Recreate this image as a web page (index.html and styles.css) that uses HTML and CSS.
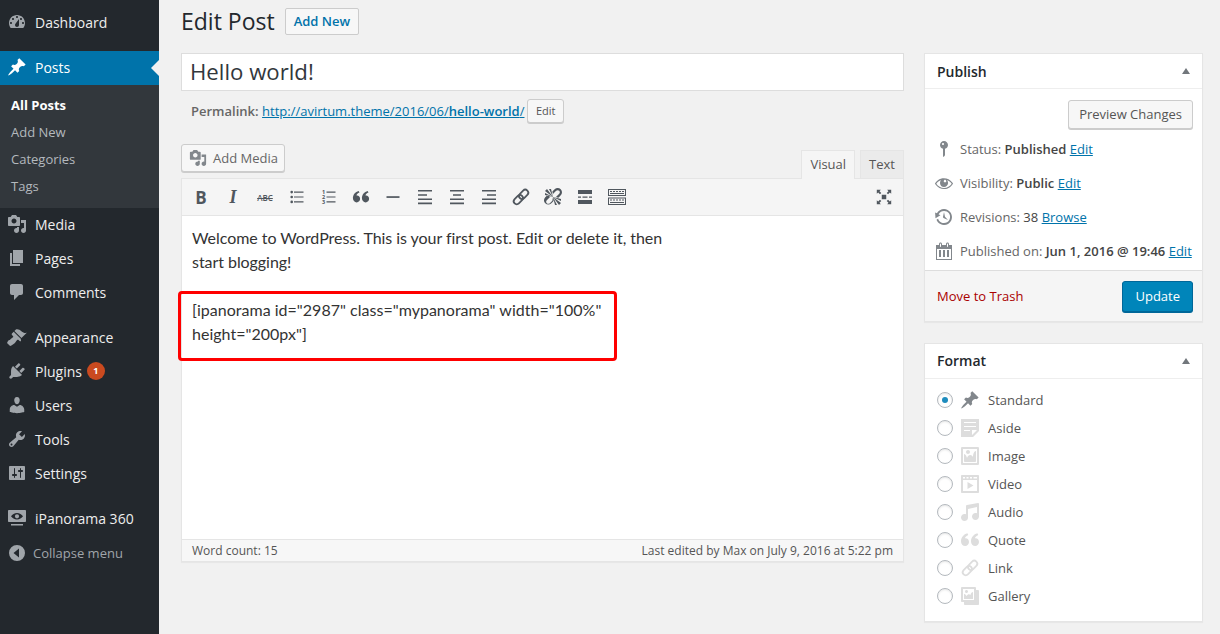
FILE: index.html
```html
<!DOCTYPE html>
<html lang="en">
<head>
    <meta charset="UTF-8">
    <title>Edit Post</title>
    <link rel="stylesheet" href="styles.css">
</head>
<body>
    <svg class="defs" xmlns="http://www.w3.org/2000/svg">
        <symbol id="i-dashboard" viewBox="0 0 20 20"><path d="M3.76 16h12.48c1.1-1.37 1.76-3.11 1.76-5 0-4.42-3.58-8-8-8s-8 3.58-8 8c0 1.89.66 3.63 1.76 5zM10 4c.55 0 1 .45 1 1s-.45 1-1 1-1-.45-1-1 .45-1 1-1zM6 6c.55 0 1 .45 1 1s-.45 1-1 1-1-.45-1-1 .45-1 1-1zm8 0c.55 0 1 .45 1 1s-.45 1-1 1-1-.45-1-1 .45-1 1-1zm-5.37 5.55L12 7v6c0 1.1-.9 2-2 2s-2-.9-2-2c0-.57.24-1.08.63-1.45zM4 10c.55 0 1 .45 1 1s-.45 1-1 1-1-.45-1-1 .45-1 1-1zm12 0c.55 0 1 .45 1 1s-.45 1-1 1-1-.45-1-1 .45-1 1-1z"/></symbol>
        <symbol id="i-pin" viewBox="0 0 20 20"><path d="M10.44 3.02l1.82-1.82 6.36 6.35-1.83 1.82c-1.05-.68-2.48-.57-3.41.36l-.75.75c-.92.93-1.04 2.35-.35 3.41l-1.83 1.82-2.41-2.41-2.8 2.79c-.42.42-3.38 2.71-3.8 2.29s1.86-3.39 2.28-3.81l2.79-2.79L4.1 9.36l1.83-1.82c1.05.69 2.48.57 3.4-.36l.75-.75c.93-.92 1.05-2.35.36-3.41z"/></symbol>
        <symbol id="i-media" viewBox="0 0 20 20"><path d="M13 11V4c0-.55-.45-1-1-1h-1.67L9 1H5L3.67 3H2c-.55 0-1 .45-1 1v7c0 .55.45 1 1 1h10c.55 0 1-.45 1-1zM7 4.5c1.38 0 2.5 1.12 2.5 2.5S8.38 9.5 7 9.5 4.5 8.38 4.5 7 5.62 4.5 7 4.5zM14 6h5v10.5c0 1.38-1.12 2.5-2.5 2.5S14 17.88 14 16.5s1.12-2.5 2.5-2.5c.17 0 .34.02.5.05V9h-3V6zm-4 8.05V13h2v3.5c0 1.38-1.12 2.5-2.5 2.5S7 17.88 7 16.5 8.12 14 9.5 14c.17 0 .34.02.5.05z"/></symbol>
        <symbol id="i-pages" viewBox="0 0 20 20"><path d="M6 15V2h10v13H6zm-1 1h8v2H3V5h2v11z"/></symbol>
        <symbol id="i-comments" viewBox="0 0 20 20"><path d="M5 2h9c1.1 0 2 .9 2 2v7c0 1.1-.9 2-2 2h-2l-5 5v-5H5c-1.1 0-2-.9-2-2V4c0-1.1.9-2 2-2z"/></symbol>
        <symbol id="i-brush" viewBox="0 0 20 20"><path d="M14.48 11.06L7.41 3.99l1.5-1.5c.5-.56 2.3-.47 3.51.32 1.21.8 1.43 1.28 2.91 2.1 1.18.64 2.45 1.26 4.45.85zm-.71.71L6.7 4.7 4.93 6.47c-.39.39-.39 1.02 0 1.41l1.06 1.06c.39.39.39 1.03 0 1.42-.6.6-1.43 1.11-2.21 1.69-.35.26-.7.53-1.01.84C1.43 12.73.96 14.1 0 15.9L3.1 19c1.8-.96 3.17-1.43 4.52-2.78.31-.31.58-.66.84-1.01.58-.78 1.09-1.61 1.69-2.21.39-.39 1.03-.39 1.42 0l1.06 1.06c.39.39 1.02.39 1.41 0z"/></symbol>
        <symbol id="i-plugin" viewBox="0 0 20 20"><path d="M13.11 4.36L9.87 7.6 8 5.73l3.24-3.24c.35-.34 1.05-.2 1.56.32.52.51.66 1.21.31 1.55zm-8 1.77l.91-1.12 9.01 9.01-1.19.84c-.71.71-2.63 1.16-3.82 1.16H6.14L4.9 17.26c-.59.59-1.54.59-2.12 0-.59-.58-.59-1.53 0-2.12l1.24-1.24v-3.88c0-1.13.4-3.19 1.09-3.89zm7.26 3.97l3.24-3.24c.34-.35 1.04-.21 1.55.31.52.51.66 1.21.31 1.55l-3.24 3.25z"/></symbol>
        <symbol id="i-users" viewBox="0 0 20 20"><path d="M10 9.25c-2.27 0-2.73-3.44-2.73-3.44C7 4.02 7.82 2 9.97 2c2.16 0 2.98 2.02 2.71 3.81 0 0-.41 3.44-2.68 3.44zm0 2.57L12.72 10c2.39 0 4.52 2.33 4.52 4.53v2.49s-3.65 1.13-7.24 1.13c-3.65 0-7.24-1.13-7.24-1.13v-2.49c0-2.25 1.94-4.48 4.47-4.48z"/></symbol>
        <symbol id="i-tools" viewBox="0 0 20 20"><path d="M16.68 9.77c-1.34 1.34-3.3 1.67-4.95.99l-5.41 6.52c-.99.99-2.59.99-3.58 0s-.99-2.59 0-3.57l6.52-5.42c-.68-1.65-.35-3.61.99-4.95 1.28-1.28 3.12-1.62 4.72-1.06l-2.89 2.89 2.82 2.82 2.86-2.87c.53 1.58.18 3.39-1.08 4.65zM3.81 16.21c.4.39 1.04.39 1.43 0 .4-.4.4-1.04 0-1.43-.39-.4-1.03-.4-1.43 0-.39.39-.39 1.03 0 1.43z"/></symbol>
        <symbol id="i-settings" viewBox="0 0 20 20"><path d="M18 16V4c0-.55-.45-1-1-1H3c-.55 0-1 .45-1 1v12c0 .55.45 1 1 1h14c.55 0 1-.45 1-1zM8 11h1c.55 0 1 .45 1 1s-.45 1-1 1H8v1.5c0 .28-.22.5-.5.5s-.5-.22-.5-.5V13H6c-.55 0-1-.45-1-1s.45-1 1-1h1V5.5c0-.28.22-.5.5-.5s.5.22.5.5V11zm5-2h-1c-.55 0-1-.45-1-1s.45-1 1-1h1V5.5c0-.28.22-.5.5-.5s.5.22.5.5V7h1c.55 0 1 .45 1 1s-.45 1-1 1h-1v5.5c0 .28-.22.5-.5.5s-.5-.22-.5-.5V9z"/></symbol>
        <symbol id="i-panorama" viewBox="0 0 20 20"><path d="M2 2h16c.55 0 1 .45 1 1v10c0 .55-.45 1-1 1H2c-.55 0-1-.45-1-1V3c0-.55.45-1 1-1zm8 3C7.5 5 5.3 6.4 4 8.3 5.3 10.2 7.5 11.5 10 11.5s4.7-1.3 6-3.2C14.7 6.4 12.5 5 10 5zm0 1.2a2.1 2.1 0 1 1 0 4.2 2.1 2.1 0 0 1 0-4.2zM4 16h12v1.5H4z"/></symbol>
        <symbol id="i-collapse" viewBox="0 0 20 20"><path d="M10 2a8 8 0 1 0 0 16 8 8 0 0 0 0-16zm2 3.5v9L6.5 10z"/></symbol>
        <symbol id="i-status" viewBox="0 0 20 20"><path d="M14 6c0 1.86-1.28 3.41-3 3.86V16c0 1-2 2-2 2V9.86c-1.72-.45-3-2-3-3.86 0-2.21 1.79-4 4-4s4 1.79 4 4zM8 5c0 .55.45 1 1 1s1-.45 1-1-.45-1-1-1-1 .45-1 1z"/></symbol>
        <symbol id="i-eye" viewBox="0 0 20 20"><path d="M18.3 9.5C15 4.9 8.5 3.8 3.9 7.2c-1.2.9-2.2 2.1-3 3.4.2.4.5.8.8 1.2 3.3 4.6 9.6 5.6 14.2 2.4.9-.7 1.7-1.4 2.4-2.4.3-.4.5-.8.8-1.2-.3-.5-.5-.8-.8-1.1zm-8.2-2.3c.5-.5 1.3-.5 1.8 0s.5 1.3 0 1.8-1.3.5-1.8 0-.5-1.3 0-1.8zm-.1 7.7c-3.1 0-6-1.6-7.7-4.2C3.5 9 5.1 7.8 7 7.2c-.7.8-1 1.7-1 2.7 0 2.2 1.7 4.1 4 4.1 2.2 0 4.1-1.7 4.1-4v-.1c0-1-.4-2-1.1-2.7 1.9.6 3.5 1.8 4.7 3.5-1.7 2.6-4.6 4.2-7.7 4.2z"/></symbol>
        <symbol id="i-backup" viewBox="0 0 20 20"><path d="M13.65 2.88c3.93 2.01 5.48 6.84 3.47 10.77s-6.83 5.48-10.77 3.47c-1.87-.96-3.2-2.56-3.86-4.4l1.64-1.03c.45 1.57 1.52 2.95 3.08 3.76 3.01 1.54 6.69.35 8.23-2.66 1.55-3.01.36-6.69-2.65-8.24C9.78 3.01 6.1 4.2 4.56 7.21l1.88.97-4.95 3.08-.39-5.82 1.78.91C4.9 2.4 9.75.89 13.65 2.88zm-4.36 7.83C9.11 10.53 9 10.28 9 10c0-.07.03-.12.04-.19h-.01L10 5l.97 4.81L14 13l-4.5-2.12.02-.02c-.08-.04-.16-.09-.23-.15z"/></symbol>
        <symbol id="i-calendar" viewBox="0 0 20 20"><path d="M15 4h3v15H2V4h3V3c0-.83.67-1.5 1.5-1.5S8 2.17 8 3v1h4V3c0-.83.67-1.5 1.5-1.5S15 2.17 15 3v1zM6 3v2.5c0 .28.22.5.5.5s.5-.22.5-.5V3c0-.28-.22-.5-.5-.5S6 2.72 6 3zm7 0v2.5c0 .28.22.5.5.5s.5-.22.5-.5V3c0-.28-.22-.5-.5-.5s-.5.22-.5.5zm4 15V8H3v10h14zM5 9h2v7H5zm4 0h2v7H9zm4 0h2v7h-2z"/></symbol>
        <symbol id="i-aside" viewBox="0 0 20 20"><path d="M1 1h18v12l-6 6H1V1zm3 3v1h12V4H4zm0 4v1h12V8H4zm6 5v-1H4v1h6zm2 4l5-5h-5v5z"/></symbol>
        <symbol id="i-image" viewBox="0 0 20 20"><path d="M2.25 1h15.5c.69 0 1.25.56 1.25 1.25v15.5c0 .69-.56 1.25-1.25 1.25H2.25C1.56 19 1 18.44 1 17.75V2.25C1 1.56 1.56 1 2.25 1zM17 17V3H3v14h14zM10 6c0-1.1-.9-2-2-2s-2 .9-2 2 .9 2 2 2 2-.9 2-2zm3 5s0-6 3-6v10c0 .55-.45 1-1 1H5c-.55 0-1-.45-1-1V8c2 0 3 4 3 4s1-3 3-3 3 2 3 2z"/></symbol>
        <symbol id="i-video" viewBox="0 0 20 20"><path d="M2 1h16c.55 0 1 .45 1 1v16c0 .55-.45 1-1 1H2c-.55 0-1-.45-1-1V2c0-.55.45-1 1-1zm1 2v1.5h2V3zm3.5 0v1.5h2V3zM10 3v1.5h2V3zm3.5 0v1.5H17V3zM3 6v11h14V6zm4.5 2l6 3.5-6 3.5z"/></symbol>
        <symbol id="i-audio" viewBox="0 0 20 20"><path d="M6.99 3.08l11.02-2c.55-.08.99.45.99 1V14.5c0 1.94-1.57 3.5-3.5 3.5S12 16.44 12 14.5c0-1.93 1.57-3.5 3.5-3.5.54 0 1.04.14 1.5.35V5.08l-9 2V16c-.24 1.7-1.74 3-3.5 3C2.57 19 1 17.44 1 15.5 1 13.57 2.57 12 4.5 12c.54 0 1.04.14 1.5.35V4.08c0-.55.44-.91.99-1z"/></symbol>
        <symbol id="i-quote" viewBox="0 0 20 20"><path d="M9 12C9 14.2 7.3 16 5.2 16 2.8 16 1 14 1 11.2 1 7.2 3.7 4.2 7.4 3.2l.9 1.9C6.4 5.9 5.2 7 5 8.3c2.3-.4 4 1.4 4 3.700zm10 0c0 2.2-1.7 4-3.800 4-2.400 0-4.200-2-4.200-4.800 0-4 2.700-7 6.400-8l.9 1.900c-1.900.8-3.100 1.900-3.300 3.200 2.300-.4 4 1.400 4 3.700z"/></symbol>
        <symbol id="i-link" viewBox="0 0 20 20"><g class="chain" transform="rotate(-45 10 10)"><rect x="1" y="7" width="10.5" height="6" rx="3"/><rect x="8.5" y="7" width="10.5" height="6" rx="3"/></g></symbol>
        <symbol id="i-unlink" viewBox="0 0 20 20"><path d="M17.74 2.26c1.68 1.69 1.68 4.41 0 6.1l-1.53 1.52c-.32.33-.69.58-1.08.77L13 10l1.69-1.64.76-.77.76-.76c.84-.84.84-2.2 0-3.04-.84-.85-2.2-.85-3.04 0l-.77.76-.76.76L10 7l-.65-2.14c.19-.38.44-.75.77-1.07l1.52-1.53c1.69-1.68 4.42-1.68 6.1 0zM2 4l8 6-6-8zm4-2l4 8-2-8H6zM2 6l8 4-8-2V6zm7.36 7.69L10 10l.64 3.69c-.19.38-.44.75-.77 1.07l-1.52 1.53c-1.69 1.68-4.42 1.68-6.1 0-1.68-1.69-1.68-4.41 0-6.1l1.53-1.52c.32-.33.69-.58 1.08-.77L7 10l-1.69 1.64-.76.77-.76.76c-.84.84-.84 2.2 0 3.04.85.85 2.2.85 3.04 0l.77-.76.76-.76zM18 16l-8-6 6 8zm-4 2l-4-8 2 8h2zm4-4l-8-4 8 2v2z"/></symbol>
        <symbol id="i-gallery" viewBox="0 0 20 20"><path d="M16 4h1.96c.57 0 1.04.47 1.04 1.04v12.92c0 .57-.47 1.04-1.04 1.04H5.04C4.47 19 4 18.53 4 17.96V16H2.04C1.47 16 1 15.53 1 14.96V2.04C1 1.47 1.47 1 2.04 1h12.92c.57 0 1.04.47 1.04 1.04V4zM3 14h11V3H3v11zm5-8.5C8 4.67 7.33 4 6.5 4S5 4.67 5 5.5 5.67 7 6.5 7 8 6.33 8 5.5zM13 13V6c-2 0-2.5 3-2.5 3S9.5 7.5 8 8.5 6.5 10 6.5 10 5.500 8 4 8v5z"/></symbol>
        <symbol id="i-ul" viewBox="0 0 20 20"><path d="M7 4.5h9.5v1.2H7zm0 4.900h9.5v1.200H7zm0 4.900h9.5v1.200H7z"/><circle cx="4.7" cy="5.1" r="1.3"/><circle cx="4.7" cy="10" r="1.3"/><circle cx="4.7" cy="14.9" r="1.3"/></symbol>
        <symbol id="i-ol" viewBox="0 0 20 20"><path d="M7.5 4.5h9v1.2h-9zm0 4.900h9v1.200h-9zm0 4.900h9v1.200h-9z"/><text x="3" y="7" class="ol-num">1</text><text x="3" y="12" class="ol-num">2</text><text x="3" y="17" class="ol-num">3</text></symbol>
        <symbol id="i-hr" viewBox="0 0 20 20"><path d="M3.5 9.2h13v1.7h-13z"/></symbol>
        <symbol id="i-left" viewBox="0 0 20 20"><path d="M3 3h14v1.6H3zm0 4.200h9v1.600H3zm0 4.200h14V13H3zm0 4.200h14v1.600H3z"/></symbol>
        <symbol id="i-center" viewBox="0 0 20 20"><path d="M3 3h14v1.6H3zm3 4.200h8v1.600H6zm-3 4.200h14V13H3zm0 4.200h14v1.600H3z"/></symbol>
        <symbol id="i-right" viewBox="0 0 20 20"><path d="M3 3h14v1.6H3zm5 4.200h9v1.600H8zm-5 4.200h14V13H3zm0 4.200h14v1.600H3z"/></symbol>
        <symbol id="i-more" viewBox="0 0 20 20"><path d="M3 3h14v4H3zm0 10h14v4H3zM3 9.5h3v1.2H3zm4.500 0h5v1.200h-5zm6.500 0h3v1.200h-3z"/></symbol>
        <symbol id="i-sink" viewBox="0 0 20 20"><path d="M1 2h18v7H1zm1 1v5h16V3zm1 1h2v1H3zm3 0h2v1H6zm3 0h2v1H9zm3 0h2v1h-2zm3 0h2v1h-2zM3 6h14v1H3zM1 10.5h18V18H1zm1 1V17h16v-5.500zm1 1h2v1H3zm3 0h2v1H6zm3 0h2v1H9zm3 0h2v1h-2zm3 0h2v1h-2zM3 15h14v1H3z"/></symbol>
        <symbol id="i-full" viewBox="0 0 20 20"><path d="M7.5 7.5h5v5h-5zM2 2h4.500L5 3.500l2 2L5.500 7l-2-2L2 6.500zm16 0v4.500L16.500 5l-2 2L13 5.500l2-2L13.500 2zM2 18v-4.500L3.500 15l2-2L7 14.500l-2 2L6.500 18zm16 0h-4.500l1.500-1.500-2-2 1.500-1.500 2 2 1.500-1.500z"/></symbol>
    </svg>

    <div class="page">
        <nav class="sidebar">
            <a class="menu-item first"><svg class="menu-icon"><use href="#i-dashboard"/></svg>Dashboard</a>
            <a class="menu-item current"><svg class="menu-icon"><use href="#i-pin"/></svg>Posts</a>
            <div class="submenu">
                <a class="sub-item active">All Posts</a>
                <a class="sub-item">Add New</a>
                <a class="sub-item">Categories</a>
                <a class="sub-item">Tags</a>
            </div>
            <a class="menu-item"><svg class="menu-icon"><use href="#i-media"/></svg>Media</a>
            <a class="menu-item"><svg class="menu-icon"><use href="#i-pages"/></svg>Pages</a>
            <a class="menu-item"><svg class="menu-icon"><use href="#i-comments"/></svg>Comments</a>
            <a class="menu-item group"><svg class="menu-icon"><use href="#i-brush"/></svg>Appearance</a>
            <a class="menu-item"><svg class="menu-icon"><use href="#i-plugin"/></svg>Plugins<span class="count">1</span></a>
            <a class="menu-item"><svg class="menu-icon"><use href="#i-users"/></svg>Users</a>
            <a class="menu-item"><svg class="menu-icon"><use href="#i-tools"/></svg>Tools</a>
            <a class="menu-item"><svg class="menu-icon"><use href="#i-settings"/></svg>Settings</a>
            <a class="menu-item group"><svg class="menu-icon"><use href="#i-panorama"/></svg>iPanorama 360</a>
            <a class="menu-item collapse"><svg class="menu-icon"><use href="#i-collapse"/></svg>Collapse menu</a>
        </nav>

        <main class="content">
            <div class="post-column">
                <div class="heading">
                    <h1>Edit Post</h1>
                    <a class="add-new">Add New</a>
                </div>
                <div class="title-box">Hello world!</div>
                <div class="permalink">
                    <b>Permalink:</b>
                    <a class="link" href="#">http://avirtum.theme/2016/06/<b>hello-world</b>/</a>
                    <span class="btn-small">Edit</span>
                </div>
                <div class="editor-top">
                    <span class="btn add-media"><svg class="btn-icon"><use href="#i-media"/></svg>Add Media</span>
                    <div class="tabs">
                        <span class="tab on">Visual</span>
                        <span class="tab">Text</span>
                    </div>
                </div>
                <div class="editor">
                    <div class="toolbar">
                        <span class="tool"><span class="tool-b">B</span></span>
                        <span class="tool"><span class="tool-i">I</span></span>
                        <span class="tool"><span class="tool-abc">ABC</span></span>
                        <span class="tool"><svg><use href="#i-ul"/></svg></span>
                        <span class="tool"><svg><use href="#i-ol"/></svg></span>
                        <span class="tool tool-quote"><svg><use href="#i-quote"/></svg></span>
                        <span class="tool"><svg><use href="#i-hr"/></svg></span>
                        <span class="tool"><svg><use href="#i-left"/></svg></span>
                        <span class="tool"><svg><use href="#i-center"/></svg></span>
                        <span class="tool"><svg><use href="#i-right"/></svg></span>
                        <span class="tool"><svg><use href="#i-link"/></svg></span>
                        <span class="tool"><svg><use href="#i-unlink"/></svg></span>
                        <span class="tool"><svg><use href="#i-more"/></svg></span>
                        <span class="tool"><svg><use href="#i-sink"/></svg></span>
                        <span class="tool tool-full"><svg><use href="#i-full"/></svg></span>
                    </div>
                    <div class="editor-body">
                        <p>Welcome to WordPress. This is your first post. Edit or delete it, then start blogging!</p>
                        <p class="shortcode">[ipanorama id="2987" class="mypanorama" width="100%" height="200px"]</p>
                        <div class="highlight"></div>
                    </div>
                    <div class="status-bar">
                        <span>Word count: 15</span>
                        <span>Last edited by Max on July 9, 2016 at 5:22 pm</span>
                    </div>
                </div>
            </div>

            <aside class="side-column">
                <section class="box publish">
                    <h2 class="box-head">Publish<span class="toggle"></span></h2>
                    <div class="preview-row"><span class="btn">Preview Changes</span></div>
                    <div class="meta-row"><svg class="meta-icon"><use href="#i-status"/></svg><span>Status: <b>Published</b> <a class="link" href="#">Edit</a></span></div>
                    <div class="meta-row"><svg class="meta-icon"><use href="#i-eye"/></svg><span>Visibility: <b>Public</b> <a class="link" href="#">Edit</a></span></div>
                    <div class="meta-row"><svg class="meta-icon"><use href="#i-backup"/></svg><span>Revisions: <b class="semi">38</b> <a class="link" href="#">Browse</a></span></div>
                    <div class="meta-row"><svg class="meta-icon"><use href="#i-calendar"/></svg><span>Published on: <b>Jun 1, 2016 @ 19:46</b> <a class="link" href="#">Edit</a></span></div>
                    <div class="publish-foot">
                        <a class="trash">Move to Trash</a>
                        <span class="update">Update</span>
                    </div>
                </section>

                <section class="box format">
                    <h2 class="box-head">Format<span class="toggle"></span></h2>
                    <div class="format-list">
                        <label class="format-row"><input type="radio" name="format" checked><svg class="format-icon pin"><use href="#i-pin"/></svg>Standard</label>
                        <label class="format-row"><input type="radio" name="format"><svg class="format-icon"><use href="#i-aside"/></svg>Aside</label>
                        <label class="format-row"><input type="radio" name="format"><svg class="format-icon"><use href="#i-image"/></svg>Image</label>
                        <label class="format-row"><input type="radio" name="format"><svg class="format-icon"><use href="#i-video"/></svg>Video</label>
                        <label class="format-row"><input type="radio" name="format"><svg class="format-icon"><use href="#i-audio"/></svg>Audio</label>
                        <label class="format-row"><input type="radio" name="format"><svg class="format-icon"><use href="#i-quote"/></svg>Quote</label>
                        <label class="format-row"><input type="radio" name="format"><svg class="format-icon"><use href="#i-link"/></svg>Link</label>
                        <label class="format-row"><input type="radio" name="format"><svg class="format-icon"><use href="#i-gallery"/></svg>Gallery</label>
                    </div>
                </section>
            </aside>
        </main>
    </div>
</body>
</html>
```

FILE: styles.css
```css
html, body {
    margin: 0;
    height: 100%;
    overflow: hidden;
}
body {
    font-family: "Open Sans", sans-serif;
    font-size: 13px;
    color: #444;
    background-color: #f1f1f1;
}
svg {
    fill: currentColor;
    fill-rule: evenodd;
}
.defs {
    display: none;
}
.chain {
    fill: none;
    stroke: currentColor;
    stroke-width: 1.8;
}
.ol-num {
    font-family: "Open Sans", sans-serif;
    font-size: 5.5px;
    font-weight: 700;
}
.page {
    display: flex;
    height: 634px;
}

/* sidebar */
.sidebar {
    width: 159px;
    flex-shrink: 0;
    background-color: #23282d;
    box-sizing: border-box;
    padding-top: 5px;
}
.menu-item {
    display: flex;
    align-items: center;
    box-sizing: border-box;
    height: 34px;
    font-size: 14px;
    color: #eee;
    position: relative;
}
.menu-icon {
    width: 20px;
    height: 20px;
    margin: 0 8px 0 7px;
    flex-shrink: 0;
    color: #a0a5aa;
}
.first {
    margin-bottom: 12px;
}
.group {
    margin-top: 11px;
}
.current {
    padding-bottom: 2px;
    background-color: #0073aa;
    color: #fff;
}
.current .menu-icon {
    color: #fff;
}
.current::after {
    content: "";
    position: absolute;
    right: 0;
    top: 50%;
    margin-top: -8px;
    border: 8px solid transparent;
    border-left-width: 0;
    border-right-color: #f1f1f1;
}
.submenu {
    background-color: #32373c;
    padding: 7px 0 8px;
    margin-bottom: -1px;
}
.sub-item {
    display: block;
    height: 27px;
    line-height: 27px;
    padding-left: 11px;
    color: #b4b9be;
}
.active {
    color: #fff;
    font-weight: 700;
}
.count {
    width: 18px;
    height: 18px;
    line-height: 18px;
    margin-left: 5px;
    border-radius: 50%;
    background-color: #ca4a1f;
    color: #fff;
    font-size: 9px;
    font-weight: 700;
    text-align: center;
}
.collapse {
    padding-top: 2px;
    font-size: 13px;
    color: #a0a5aa;
}
.collapse .menu-icon {
    margin-right: 6px;
}

/* post column */
.content {
    display: flex;
    align-items: flex-start;
    padding-left: 22px;
}
.post-column {
    width: 723px;
}
.heading {
    display: flex;
    align-items: center;
    height: 27px;
    margin-top: 8px;
}
h1 {
    margin: 0 10px 0 0;
    font-size: 23px;
    font-weight: 400;
    color: #23282d;
    position: relative;
    top: -1px;
}
.add-new {
    box-sizing: border-box;
    height: 27px;
    line-height: 25px;
    padding: 0 8px;
    border: 1px solid #ccc;
    border-radius: 2px;
    background-color: #f7f7f7;
    color: #0073aa;
    font-weight: 600;
}
.title-box {
    box-sizing: border-box;
    height: 38px;
    margin-top: 18px;
    padding-left: 8px;
    line-height: 35px;
    font-size: 22.2px;
    color: #32373c;
    background-color: #fff;
    border: 1px solid #ddd;
}
.permalink {
    display: flex;
    align-items: center;
    height: 26px;
    margin-top: 7px;
    padding-left: 10px;
    color: #666;
    white-space: pre;
}
.link {
    color: #0073aa;
    text-decoration: underline;
}
.permalink b {
    font-weight: 600;
}
.permalink .link {
    margin-left: 3.5px;
}
.btn-small {
    box-sizing: border-box;
    height: 24px;
    line-height: 22px;
    margin-left: 3px;
    padding: 0 7.5px;
    font-size: 11px;
    color: #555;
    background-color: #f7f7f7;
    border: 1px solid #ccc;
    border-radius: 3px;
    box-shadow: 0 1px 0 #ccc;
}
.btn {
    box-sizing: border-box;
    display: inline-flex;
    align-items: center;
    height: 28px;
    padding: 0 10px;
    color: #555;
    background-color: #f7f7f7;
    border: 1px solid #ccc;
    border-radius: 3px;
    box-shadow: 0 1px 0 #ccc;
}
.add-media {
    padding: 0 6px 0 7px;
    color: #666;
}
.btn-icon {
    width: 18px;
    height: 18px;
    margin-right: 6px;
    color: #82878c;
}
.editor-top {
    display: flex;
    justify-content: space-between;
    align-items: flex-start;
    height: 34px;
    margin-top: 20px;
}
.tabs {
    display: flex;
    gap: 5px;
    margin-top: 6px;
}
.tab {
    box-sizing: border-box;
    height: 28px;
    line-height: 27px;
    padding: 0 8px;
    color: #555;
    background-color: #ebebeb;
    border: 1px solid #e5e5e5;
    border-bottom: 0;
}
.tab.on {
    height: 29px;
    background-color: #f5f5f5;
    position: relative;
}
.editor {
    border: 1px solid #e5e5e5;
    background-color: #fff;
    box-shadow: 0 1px 1px rgba(0, 0, 0, 0.04);
}
.toolbar {
    display: flex;
    align-items: center;
    height: 36px;
    padding: 0 3px;
    background-color: #f5f5f5;
    border-bottom: 1px solid #e5e5e5;
    color: #50575e;
}
.tool {
    display: flex;
    align-items: center;
    justify-content: center;
    width: 32px;
    height: 32px;
}
.tool svg {
    width: 20px;
    height: 20px;
}
.tool-b {
    font-size: 17px;
    font-weight: 700;
}
.tool-i {
    font-size: 18px;
    font-weight: 600;
    font-style: italic;
    font-family: "Liberation Serif", serif;
}
.tool-abc {
    font-size: 8px;
    font-weight: 600;
    text-decoration: line-through;
}
.tool-quote svg {
    width: 18px;
    height: 18px;
}
.tool-full {
    margin-left: auto;
}
.tool-full svg {
    width: 18px;
    height: 18px;
}
.editor-body {
    position: relative;
    box-sizing: border-box;
    height: 323px;
    padding: 10px 10px 0;
    font-family: Lato, sans-serif;
    font-size: 16px;
    line-height: 24px;
    color: #333;
}
.editor-body p {
    max-width: 490px;
    margin: 0 0 24px;
    letter-spacing: -0.05px;
}
.editor-body p.shortcode {
    letter-spacing: 0.02px;
}
.highlight {
    position: absolute;
    left: -4px;
    top: 75px;
    box-sizing: border-box;
    width: 439px;
    height: 70px;
    border: 3px solid #f00;
    border-radius: 4px;
}
.status-bar {
    display: flex;
    justify-content: space-between;
    align-items: center;
    box-sizing: border-box;
    height: 22px;
    padding: 0 10px 1px;
    font-size: 12px;
    color: #555;
    background-color: #f7f7f7;
    border-top: 1px solid #e5e5e5;
}

/* right column */
.side-column {
    width: 279px;
    margin-left: 20px;
    padding-top: 53px;
}
.box {
    box-sizing: border-box;
    background-color: #fff;
    border: 1px solid #e5e5e5;
    box-shadow: 0 1px 1px rgba(0, 0, 0, 0.04);
}
.publish {
    height: 269px;
    margin-bottom: 21px;
    position: relative;
}
.format {
    height: 279px;
}
.box-head {
    display: flex;
    justify-content: space-between;
    align-items: center;
    box-sizing: border-box;
    height: 35px;
    margin: 0;
    padding: 0 12px;
    font-size: 14px;
    font-weight: 600;
    color: #23282d;
    border-bottom: 1px solid #eee;
}
.format .box-head {
    padding-bottom: 1px;
}
.toggle {
    width: 0;
    height: 0;
    border: 4.5px solid transparent;
    border-top-width: 0;
    border-bottom: 6px solid #72777c;
}
.preview-row {
    display: flex;
    justify-content: flex-end;
    height: 32px;
    padding: 11px 9px 0 0;
}
.preview-row .btn {
    height: 29px;
    padding-bottom: 1px;
}
.meta-row {
    display: flex;
    align-items: center;
    height: 34px;
    padding-left: 9px;
    color: #666;
}
.meta-row b {
    font-weight: 600;
    color: #444;
}
.meta-row b.semi {
    font-weight: 400;
}
.meta-icon {
    width: 20px;
    height: 20px;
    margin-right: 6px;
    color: #82878c;
    flex-shrink: 0;
}
.publish-foot {
    position: absolute;
    left: 0;
    right: 0;
    bottom: 0;
    display: flex;
    justify-content: space-between;
    align-items: center;
    box-sizing: border-box;
    height: 51px;
    padding: 0 9px 0 12px;
    background-color: #f5f5f5;
    border-top: 1px solid #ddd;
}
.trash {
    color: #a00;
}
.update {
    box-sizing: border-box;
    height: 31px;
    line-height: 29px;
    padding: 0 12px;
    font-size: 13px;
    color: #fff;
    background-color: #0085ba;
    border: 1px solid #006799;
    border-radius: 3px;
    box-shadow: 0 1px 0 #006799;
}
.format-list {
    padding-top: 7px;
}
.format-row {
    display: flex;
    align-items: center;
    height: 28px;
    padding-left: 12px;
    color: #555;
}
.format-row input {
    appearance: none;
    box-sizing: border-box;
    display: flex;
    align-items: center;
    justify-content: center;
    width: 16px;
    height: 16px;
    margin: 0 7px 0 0;
    border: 1px solid #b4b9be;
    border-radius: 50%;
    background-color: #fff;
    box-shadow: inset 0 1px 2px rgba(0, 0, 0, 0.1);
}
.format-row input:checked::before {
    content: "";
    width: 6px;
    height: 6px;
    border-radius: 50%;
    background-color: #1e8cbe;
}
.format-icon {
    width: 20px;
    height: 20px;
    margin-right: 8px;
    color: #ddd;
}
.format-icon.pin {
    color: #82878c;
}
```
